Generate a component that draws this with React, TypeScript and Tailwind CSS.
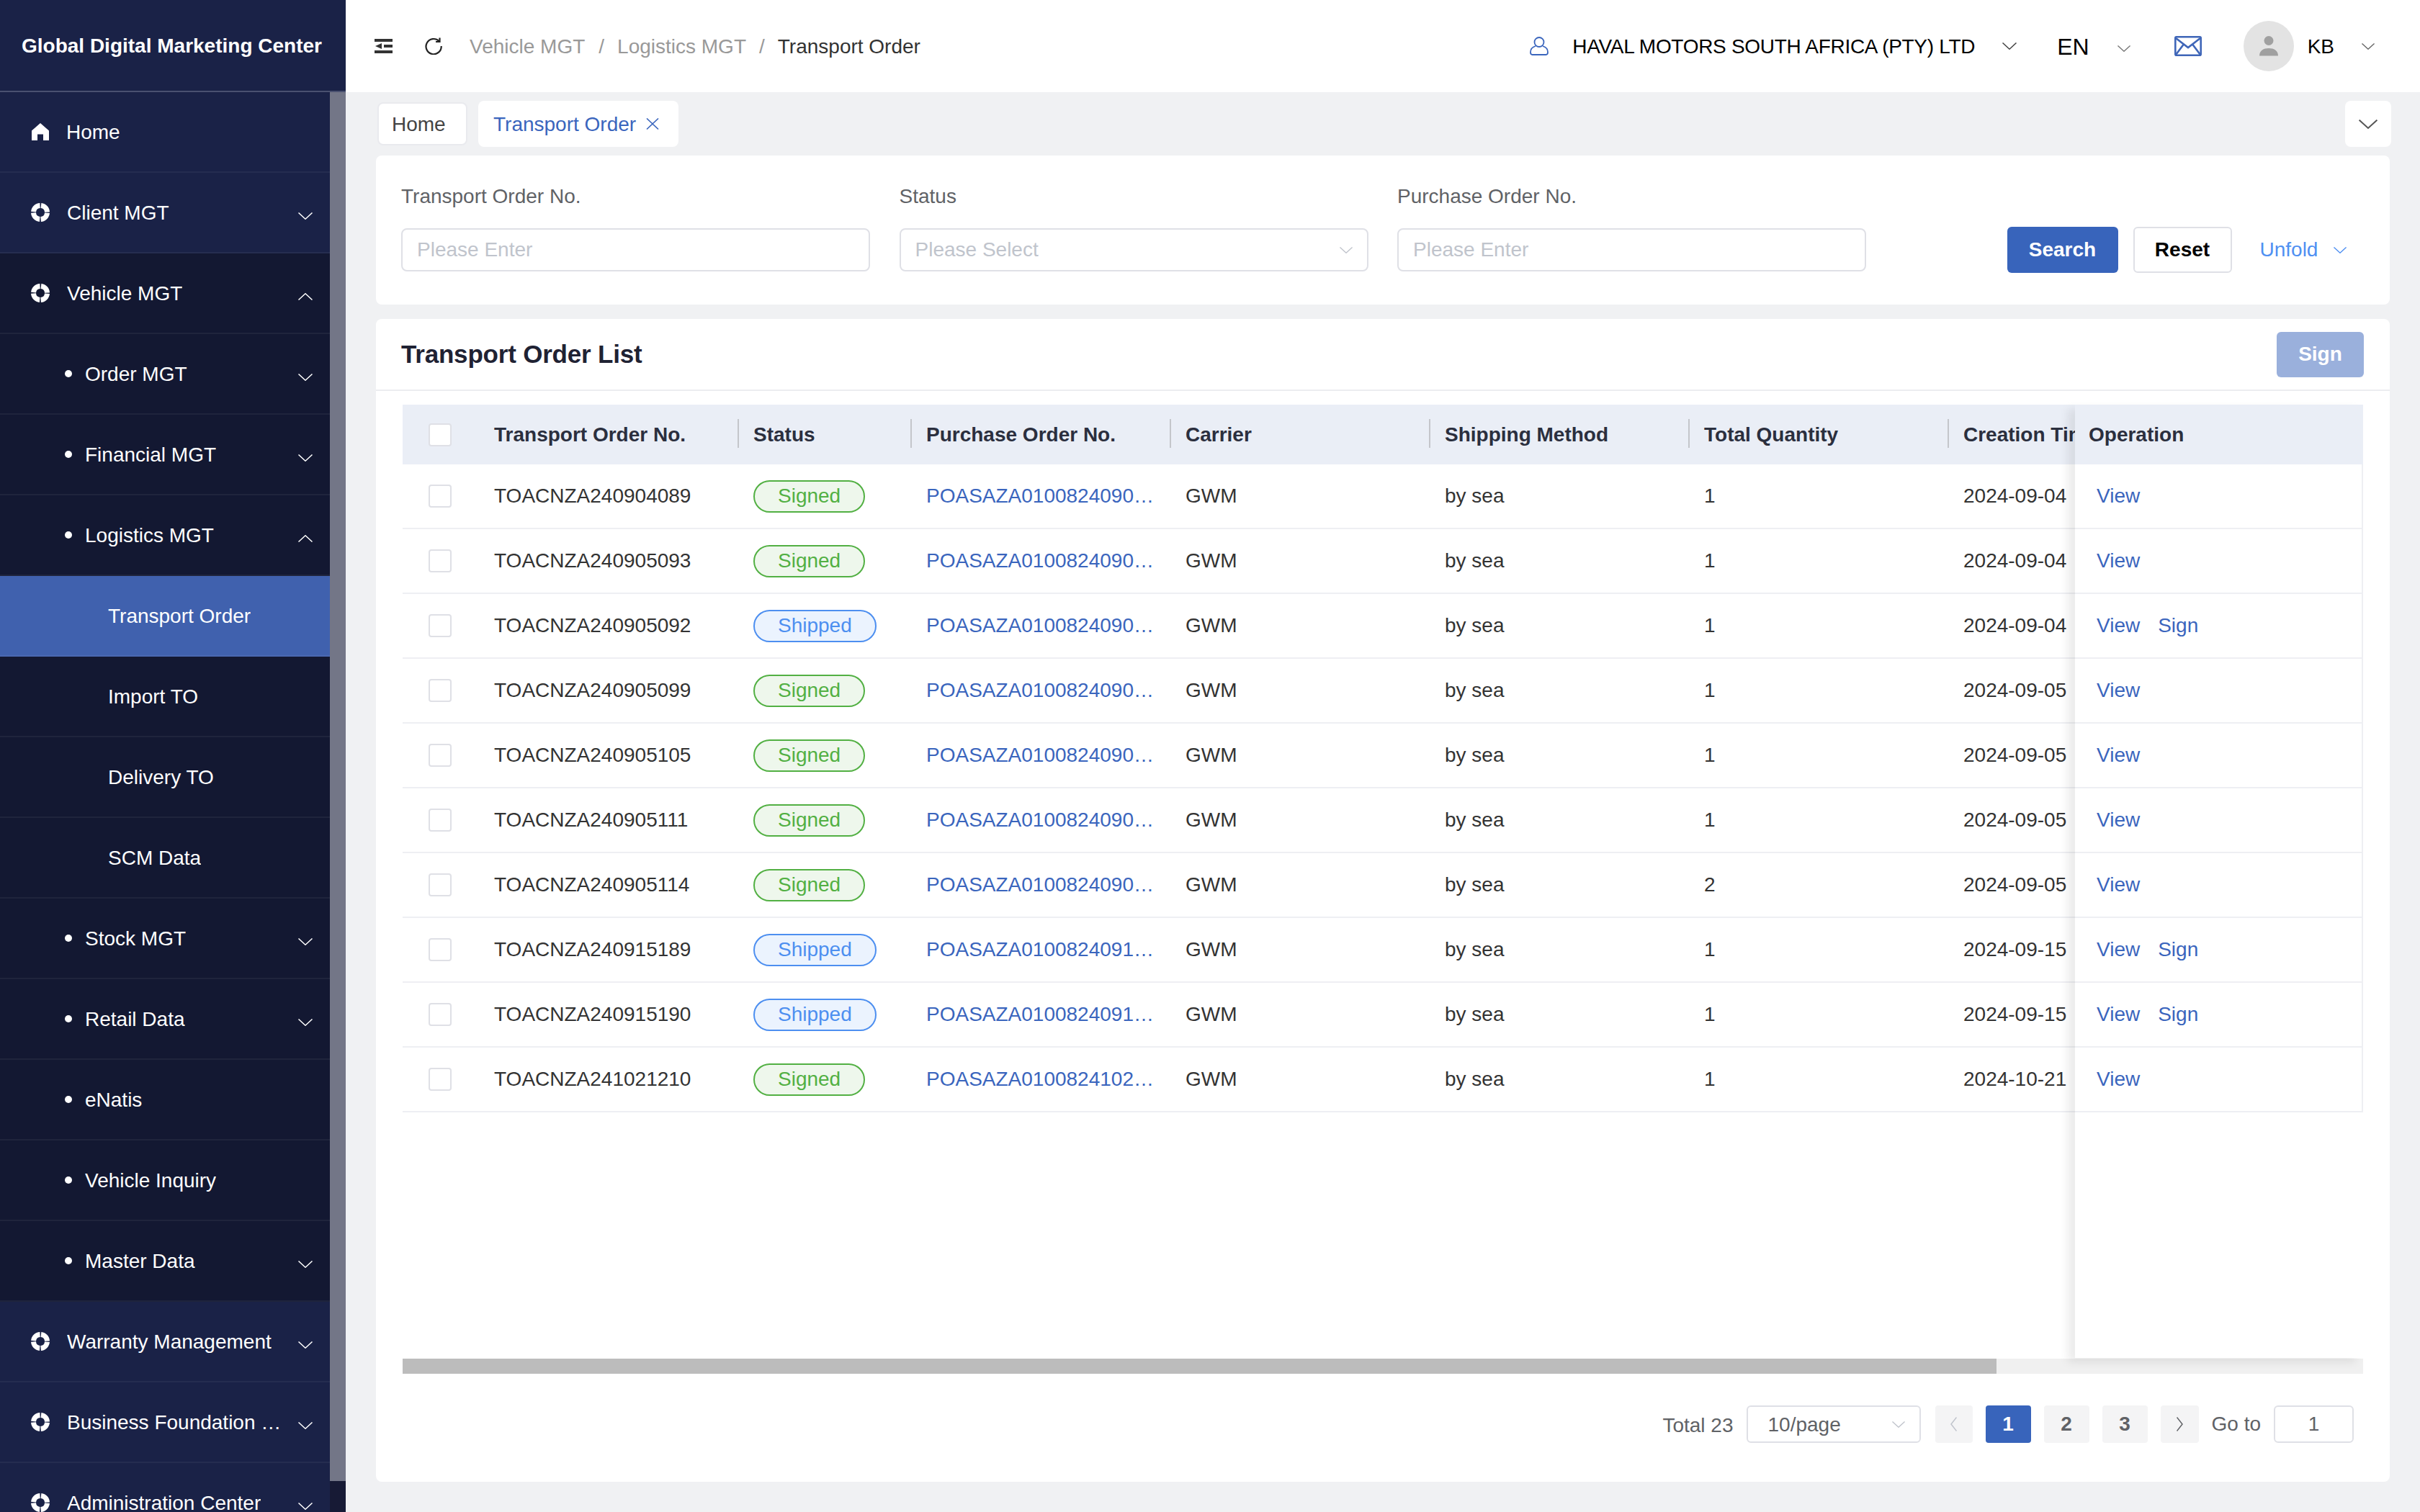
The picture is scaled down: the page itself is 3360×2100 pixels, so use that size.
const MENU = [
  { label: "Home", icon: "home", level: 0 },
  { label: "Client MGT", icon: "target", level: 0, arrow: "down" },
  { label: "Vehicle MGT", icon: "target", level: 0, arrow: "up", dark: true },
  { label: "Order MGT", level: 1, arrow: "down", dark: true },
  { label: "Financial MGT", level: 1, arrow: "down", dark: true },
  { label: "Logistics MGT", level: 1, arrow: "up", dark: true },
  { label: "Transport Order", level: 2, active: true },
  { label: "Import TO", level: 2, dark: true },
  { label: "Delivery TO", level: 2, dark: true },
  { label: "SCM Data", level: 2, dark: true },
  { label: "Stock MGT", level: 1, arrow: "down", dark: true },
  { label: "Retail Data", level: 1, arrow: "down", dark: true },
  { label: "eNatis", level: 1, dark: true },
  { label: "Vehicle Inquiry", level: 1, dark: true },
  { label: "Master Data", level: 1, arrow: "down", dark: true },
  { label: "Warranty Management", icon: "target", level: 0, arrow: "down" },
  { label: "Business Foundation Data", icon: "target", level: 0, arrow: "down" },
  { label: "Administration Center", icon: "target", level: 0, arrow: "down" },
];

const ROWS = [
  { no: "TOACNZA240904089", status: "Signed", po: "POASAZA01008240901234", qty: 1, date: "2024-09-04" },
  { no: "TOACNZA240905093", status: "Signed", po: "POASAZA01008240901235", qty: 1, date: "2024-09-04" },
  { no: "TOACNZA240905092", status: "Shipped", po: "POASAZA01008240901236", qty: 1, date: "2024-09-04" },
  { no: "TOACNZA240905099", status: "Signed", po: "POASAZA01008240905001", qty: 1, date: "2024-09-05" },
  { no: "TOACNZA240905105", status: "Signed", po: "POASAZA01008240905002", qty: 1, date: "2024-09-05" },
  { no: "TOACNZA240905111", status: "Signed", po: "POASAZA01008240905003", qty: 1, date: "2024-09-05" },
  { no: "TOACNZA240905114", status: "Signed", po: "POASAZA01008240905004", qty: 2, date: "2024-09-05" },
  { no: "TOACNZA240915189", status: "Shipped", po: "POASAZA01008240915001", qty: 1, date: "2024-09-15" },
  { no: "TOACNZA240915190", status: "Shipped", po: "POASAZA01008240915002", qty: 1, date: "2024-09-15" },
  { no: "TOACNZA241021210", status: "Signed", po: "POASAZA01008241021001", qty: 1, date: "2024-10-21" },
];

function Chevron({ up, className }: { up?: boolean; className?: string }) {
  return (
    <svg viewBox="0 0 20 10" fill="none" stroke="currentColor" strokeWidth="1.5" className={className}>
      <path d={up ? "M0.5 9.5 10 0.8 19.5 9.5" : "M0.5 0.5 10 9.2 19.5 0.5"} />
    </svg>
  );
}

function HomeIcon() {
  return (
    <svg viewBox="0 0 24 24" fill="white" className="w-[24px] h-[24px] ml-[44px] shrink-0">
      <path d="M12 0 24 10.5V24H16V15.5H8V24H0V10.5Z" />
    </svg>
  );
}

function TargetIcon() {
  return (
    <svg viewBox="0 0 26 26" fill="none" className="w-[26px] h-[26px] ml-[43px] shrink-0">
      <circle cx="13" cy="13" r="9.5" stroke="white" strokeWidth="7" strokeDasharray="13.4 1.52" strokeDashoffset="-0.76" />
    </svg>
  );
}

function MenuRow({ item }: { item: (typeof MENU)[number] }) {
  const bg = item.active ? "bg-[#4061ae]" : item.dark ? "bg-[#131832]" : "bg-[#1a2247]";
  return (
    <div className={`h-[112px] shrink-0 flex items-center border-b-2 border-white/5 relative text-[28px] text-white ${bg}`}>
      {item.icon === "home" && <HomeIcon />}
      {item.icon === "target" && <TargetIcon />}
      {item.level === 1 && <span className="w-[10px] h-[10px] rounded-full bg-white ml-[90px] shrink-0" />}
      <span
        className={`truncate mt-[2px] ${
          item.level === 0 ? "ml-[24px] max-w-[300px]" : item.level === 1 ? "ml-[18px]" : "ml-[150px]"
        }`}
      >
        {item.label}
      </span>
      {item.arrow && (
        <Chevron up={item.arrow === "up"} className="absolute left-[414px] top-[55px] w-[20px] h-[10px]" />
      )}
    </div>
  );
}

function Sidebar() {
  return (
    <aside className="w-[480px] h-full shrink-0 flex flex-col bg-[#1a2247]">
      <div className="h-[128px] shrink-0 border-b-2 border-[#4a5170] flex items-center pl-[30px] pt-[2px] text-[28px] font-bold text-white whitespace-nowrap">
        Global Digital Marketing Center
      </div>
      <div className="flex-1 flex min-h-0">
        <div className="w-[458px] flex flex-col overflow-hidden">
          {MENU.map((item) => (
            <MenuRow key={item.label} item={item} />
          ))}
        </div>
        <div className="w-[22px] bg-[#171a35]">
          <div className="h-[1929px] bg-[#737687]" />
        </div>
      </div>
    </aside>
  );
}

function TopBar() {
  return (
    <header className="h-[128px] shrink-0 bg-white flex items-center pr-[63px] text-[28px]">
      <svg viewBox="0 0 25 20" fill="#333" className="w-[25px] h-[20px] ml-[40px]">
        <rect width="25" height="4" />
        <rect x="13" y="8" width="12" height="4" />
        <rect y="16" width="25" height="4" />
        <path d="M10 6v8L1 10Z" />
      </svg>
      <svg viewBox="0 0 24 24" fill="none" stroke="#222" strokeWidth="2.2" className="w-[24px] h-[24px] ml-[45px]">
        <path d="M19.5 5A10.6 10.6 0 1 0 22.7 12" />
        <path d="M20.5 0.5V6H15" />
      </svg>
      <div className="flex items-center ml-[38px] mt-[1px] text-[#999]">
        <span>Vehicle MGT</span>
        <span className="ml-[19px] mr-[18px]">/</span>
        <span>Logistics MGT</span>
        <span className="ml-[18px] mr-[18px]">/</span>
        <span className="text-[#333]">Transport Order</span>
      </div>
      <svg viewBox="0 0 26 26" fill="none" stroke="#3a65bd" strokeWidth="1.8" className="w-[26px] h-[26px] ml-auto">
        <circle cx="13" cy="7.5" r="6.5" />
        <path d="M8 13C3 14.5 1 17.5 1 21.5Q1 25 3.5 25H22.5Q25 25 25 21.5C25 17.5 23 14.5 18 13" />
      </svg>
      <span className="ml-[33px] mt-[1px] text-black whitespace-nowrap tracking-[-0.3px]">HAVAL MOTORS SOUTH AFRICA (PTY) LTD</span>
      <Chevron className="ml-[38px] w-[20px] h-[10px] text-[#444]" />
      <span className="ml-[56px] mt-[1px] text-[32px] text-black">EN</span>
      <Chevron className="ml-[39px] w-[18px] h-[9px] text-[#777] mt-[6px]" />
      <svg viewBox="0 0 38 28" fill="none" stroke="#3f66b8" strokeWidth="2.6" className="w-[38px] h-[28px] ml-[61px]">
        <rect x="1.3" y="1.3" width="35.4" height="25.4" rx="1.5" />
        <path d="M2 3 19 16 36 3M2 26 12.5 12M36 26 25.5 12" />
      </svg>
      <div className="ml-[58px] w-[70px] h-[70px] rounded-full bg-[#e3e3e3] flex items-center justify-center">
        <svg viewBox="0 0 28 28" fill="#a0a0a0" className="w-[28px] h-[28px]">
          <circle cx="14" cy="6.5" r="6.5" />
          <path d="M1 27.5C1 20 7 17 14 17S27 20 27 27.5Z" />
        </svg>
      </div>
      <span className="ml-[19px] mt-[1px] text-black">KB</span>
      <Chevron className="ml-[38px] w-[18px] h-[9px] text-[#666]" />
    </header>
  );
}

function TabsRow() {
  return (
    <div className="h-[64px] flex items-center text-[28px]">
      <div className="h-[60px] w-[125px] pl-[18px] pt-[2px] ml-[2px] rounded-[8px] bg-white border-2 border-[#e9eaee] flex items-center text-[#444]">Home</div>
      <div className="h-[64px] w-[278px] ml-[15px] pl-[21px] rounded-[8px] bg-white flex items-center text-[#3a65bd]">
        <span className="mt-[2px]">Transport Order</span>
        <svg viewBox="0 0 18 16" fill="none" stroke="currentColor" strokeWidth="1.6" className="w-[18px] h-[16px] ml-[14px]">
          <path d="M1 0.5 17 15.5M17 0.5 1 15.5" />
        </svg>
      </div>
      <div className="ml-auto h-[64px] w-[64px] -mr-[2px] rounded-[8px] bg-white flex items-center justify-center">
        <Chevron className="w-[26px] h-[13px] text-[#555]" />
      </div>
    </div>
  );
}

function Field({ label, placeholder, select }: { label: string; placeholder: string; select?: boolean }) {
  return (
    <div className="w-[651px] shrink-0">
      <div className="h-[40px] pt-[1px] flex items-center text-[28px] text-[#606266]">{label}</div>
      <div className="mt-[25px] h-[60px] rounded-[8px] border-2 border-[#dfe0e6] flex items-center justify-between pl-[20px] pr-[20px] text-[28px] text-[#c0c4cc]">
        {placeholder}
        {select && <Chevron className="w-[18px] h-[9px] text-[#c0c4cc]" />}
      </div>
    </div>
  );
}

function SearchCard() {
  return (
    <section className="mt-[12px] h-[207px] rounded-[8px] bg-white pl-[35px] pt-[36px] flex items-start gap-[40.5px]">
      <Field label="Transport Order No." placeholder="Please Enter" />
      <Field label="Status" placeholder="Please Select" select />
      <Field label="Purchase Order No." placeholder="Please Enter" />
      <div className="flex items-center ml-[155px] mt-[63px] text-[28px]">
        <button className="w-[154px] h-[64px] rounded-[6px] bg-[#3864bb] text-white font-bold">Search</button>
        <button className="w-[137px] h-[64px] ml-[21px] rounded-[6px] border-2 border-[#dfe0e6] text-black font-bold">Reset</button>
        <span className="ml-[39px] text-[#4f90f2]">Unfold</span>
        <Chevron className="ml-[22px] w-[18px] h-[9px] text-[#4f90f2]" />
      </div>
    </section>
  );
}

function Checkbox() {
  return <span className="w-[32px] h-[32px] rounded-[4px] border-2 border-[#dfe0e6] bg-white block" />;
}

function StatusTag({ status }: { status: string }) {
  const signed = status === "Signed";
  return (
    <span
      className={`h-[45px] px-[32px] rounded-full border-2 flex items-center ${
        signed ? "border-[#52b043] bg-[#eef7ec] text-[#52b043]" : "border-[#4d8ff0] bg-[#ebf3fe] text-[#4d8ff0]"
      }`}
    >
      {status}
    </span>
  );
}

function HeadCell({ w, children }: { w: string; children: string }) {
  return (
    <div className={`${w} shrink-0 h-full flex items-center pl-[20px] relative`}>
      <span className="whitespace-nowrap">{children}</span>
      <span className="absolute right-0 top-[20px] h-[40px] w-[2px] bg-[#c4c6cb]" />
    </div>
  );
}

function TransportTable() {
  return (
    <div className="flex h-[1324px]">
      <div className="w-[2322px] overflow-hidden">
        <div className="h-[83px] w-[2800px] flex items-center bg-[#eaeef6] text-[28px] font-bold text-[#2b2f3e]">
          <div className="w-[107px] pl-[36px] shrink-0">
            <Checkbox />
          </div>
          <HeadCell w="w-[360px]">Transport Order No.</HeadCell>
          <HeadCell w="w-[240px]">Status</HeadCell>
          <HeadCell w="w-[360px]">Purchase Order No.</HeadCell>
          <HeadCell w="w-[360px]">Carrier</HeadCell>
          <HeadCell w="w-[360px]">Shipping Method</HeadCell>
          <HeadCell w="w-[360px]">Total Quantity</HeadCell>
          <HeadCell w="w-[360px]">Creation Time</HeadCell>
        </div>
        {ROWS.map((row) => (
          <div key={row.no} className="h-[90px] w-[2800px] flex items-center border-b-2 border-[#eeeff3] text-[28px] text-[#333]">
            <div className="w-[107px] pl-[36px] shrink-0">
              <Checkbox />
            </div>
            <div className="w-[360px] shrink-0 pl-[20px]">{row.no}</div>
            <div className="w-[240px] shrink-0 pl-[20px] flex">
              <StatusTag status={row.status} />
            </div>
            <div className="w-[360px] shrink-0 px-[20px] truncate text-[#3a65bd]">{row.po}</div>
            <div className="w-[360px] shrink-0 pl-[20px]">GWM</div>
            <div className="w-[360px] shrink-0 pl-[20px]">by sea</div>
            <div className="w-[360px] shrink-0 pl-[20px]">{row.qty}</div>
            <div className="w-[360px] shrink-0 pl-[20px]">{row.date}</div>
          </div>
        ))}
      </div>
      <div className="w-[400px] shrink-0 relative z-10 bg-white shadow-[-10px_6px_12px_rgba(0,0,0,0.08)] text-[28px]">
        <div className="h-[83px] bg-[#eaeef6] flex items-center pl-[19px] font-bold text-[#2b2f3e]">Operation</div>
        {ROWS.map((row) => (
          <div key={row.no} className="h-[90px] flex items-center pl-[30px] border-b-2 border-r-2 border-[#eeeff3] text-[#3a65bd]">
            <span>View</span>
            {row.status === "Shipped" && <span className="ml-[25px]">Sign</span>}
          </div>
        ))}
      </div>
    </div>
  );
}

function Pagination() {
  return (
    <div className="mt-[44px] h-[52px] flex items-center justify-end gap-[18px] pr-[13px] text-[28px] text-[#606266]">
      <span className="mt-[3px]">Total 23</span>
      <div className="w-[242px] h-[52px] rounded-[6px] border-2 border-[#dfe0e6] flex items-center justify-between pl-[28px] pr-[20px]">
        <span className="mt-[2px]">10/page</span>
        <Chevron className="w-[18px] h-[9px] text-[#c0c4cc]" />
      </div>
      <div className="ml-[2px] w-[52px] h-[52px] rounded-[4px] bg-[#f4f4f5] flex items-center justify-center">
        <svg viewBox="0 0 9 20" fill="none" stroke="#c0c4cc" strokeWidth="1.5" className="w-[9px] h-[20px]">
          <path d="M8.5 0.5 1 10 8.5 19.5" />
        </svg>
      </div>
      <div className="w-[63px] h-[52px] rounded-[4px] bg-[#3864bb] text-white font-bold flex items-center justify-center">1</div>
      <div className="w-[63px] h-[52px] rounded-[4px] bg-[#f4f4f5] font-bold flex items-center justify-center">2</div>
      <div className="w-[63px] h-[52px] rounded-[4px] bg-[#f4f4f5] font-bold flex items-center justify-center">3</div>
      <div className="w-[53px] h-[52px] rounded-[4px] bg-[#f4f4f5] flex items-center justify-center">
        <svg viewBox="0 0 9 20" fill="none" stroke="#606266" strokeWidth="1.5" className="w-[9px] h-[20px]">
          <path d="M0.5 0.5 8 10 0.5 19.5" />
        </svg>
      </div>
      <span>Go to</span>
      <div className="w-[111px] h-[52px] rounded-[6px] border-2 border-[#dfe0e6] flex items-center justify-center">1</div>
    </div>
  );
}

function ListCard() {
  return (
    <section className="mt-[20px] h-[1615px] rounded-[8px] bg-white">
      <div className="h-[100px] border-b-2 border-[#ecedf0] flex items-center justify-between pl-[35px] pr-[36px]">
        <h2 className="text-[35px] tracking-[-0.2px] font-bold text-[#1f2233]">Transport Order List</h2>
        <button className="w-[121px] h-[63px] rounded-[6px] bg-[#9ab0dc] text-white text-[28px] font-bold">Sign</button>
      </div>
      <div className="px-[37px] pt-[19px]">
        <TransportTable />
        <div className="mt-[1px] h-[21px] bg-[#f0f0f0]">
          <div className="w-[2213px] h-full bg-[#bcbcbc]" />
        </div>
        <Pagination />
      </div>
    </section>
  );
}

export default function App() {
  return (
    <div className="w-[3360px] h-[2100px] flex overflow-hidden bg-[#f0f1f3] [font-family:'Liberation_Sans',Arial,sans-serif]">
      <Sidebar />
      <div className="flex-1 flex flex-col min-w-0">
        <TopBar />
        <main className="px-[42px] pt-[12px]">
          <TabsRow />
          <SearchCard />
          <ListCard />
        </main>
      </div>
    </div>
  );
}
